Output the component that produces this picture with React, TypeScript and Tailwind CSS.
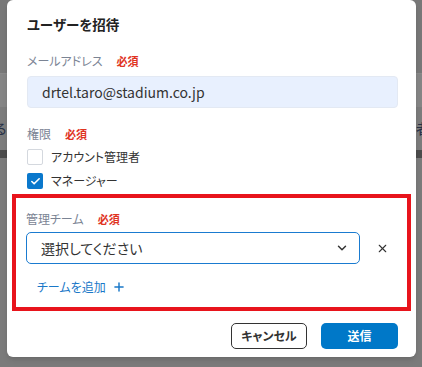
import { ChevronDown, Plus, X, Check } from 'lucide-react';

function Required() {
    return <span className="ml-[14px] text-[11px] font-bold text-[#e0341f]">必須</span>;
}

function Label({ children }: { children: React.ReactNode }) {
    return (
        <div className="flex items-center text-[12px] leading-[18px] text-[#7b8494]">
            <span>{children}</span>
            <Required />
        </div>
    );
}

export default function App() {
    return (
        <div
            className="relative h-[367px] w-[422px] overflow-hidden bg-[#7a7a7a] [font-feature-settings:'palt']"
            style={{ fontFamily: '"Noto Sans CJK JP", "Noto Sans", sans-serif' }}
        >
            {/* dimmed page behind the dialog */}
            <div className="flex h-full flex-col">
                <div className="h-[73px] bg-[#787878]" />
                <div className="h-[34px] border-t border-[#8a8a8a] bg-[#858585]" />
                <div className="flex h-[43px] items-center justify-between bg-[#7c7c7c] text-[14px] text-[#263046]">
                    <span className="-ml-[6px]">る</span>
                    <span className="-mr-[8px]">者</span>
                </div>
                <div className="h-[8px] bg-[#4c4c4c]" />
                <div className="flex-1 bg-[#7b7b7b]" />
            </div>

            {/* dialog */}
            <div className="absolute left-[7px] top-0 flex h-[357px] w-[409px] flex-col rounded-[6px] bg-white shadow-md">
                <h2 className="mt-[14px] pl-[20px] text-[13.5px] font-bold leading-[20px] text-[#222]">
                    ユーザーを招待
                </h2>

                <div className="mt-[18px] pl-[20px] pr-[18px]">
                    <Label>メールアドレス</Label>
                    <div className="mt-[6px] flex h-[32px] items-center rounded-[4px] border border-[#e3e9f3] bg-[#e8f0fe] pl-[14px] text-[14px] text-[#333]">
                        drtel.taro@stadium.co.jp
                    </div>
                </div>

                <div className="mt-[17px] pl-[20px]">
                    <Label>権限</Label>
                    <div className="mt-[6px] flex flex-col gap-[8px]">
                        <label className="flex items-center gap-[8px] text-[12px] leading-[16px] text-[#333]">
                            <span className="h-[16px] w-[16px] rounded-[2px] border border-[#d4d8de] bg-white" />
                            アカウント管理者
                        </label>
                        <label className="flex items-center gap-[8px] text-[12px] leading-[16px] text-[#333]">
                            <span className="flex h-[16px] w-[16px] items-center justify-center rounded-[2px] bg-[#0a78cc]">
                                <Check size={11} strokeWidth={3.5} className="text-white" />
                            </span>
                            マネージャー
                        </label>
                    </div>
                </div>

                <div className="mx-[5px] mt-[5px] border-[4px] border-[#e8141c] pb-[11px] pl-[10px] pr-[8px] pt-[12px]">
                    <Label>管理チーム</Label>
                    <div className="mt-[4px] flex items-center">
                        <div className="flex h-[32px] w-[334px] items-center justify-between rounded-[5px] border-[1.5px] border-[#1a7bd0] pl-[14px] pr-[10px] text-[14px] text-[#333]">
                            <span>選択してください</span>
                            <ChevronDown size={14} strokeWidth={2.5} className="text-[#333]" />
                        </div>
                        <X size={13} strokeWidth={2} className="ml-[16px] text-[#333]" />
                    </div>
                    <button
                        type="button"
                        className="mt-[14px] ml-[11px] flex items-center gap-[6px] text-[12px] leading-[18px] text-[#1a78c8]"
                    >
                        チームを追加
                        <Plus size={14} strokeWidth={2.5} />
                    </button>
                </div>

                <div className="mt-[12px] flex justify-end gap-[14px] pr-[18px]">
                    <button
                        type="button"
                        className="h-[26px] w-[76px] rounded-[5px] border border-[#333] text-[12px] font-bold text-[#333]"
                    >
                        キャンセル
                    </button>
                    <button
                        type="button"
                        className="h-[26px] w-[77px] rounded-[5px] bg-[#0078c8] text-[12px] font-bold text-white"
                    >
                        送信
                    </button>
                </div>
            </div>
        </div>
    );
}
